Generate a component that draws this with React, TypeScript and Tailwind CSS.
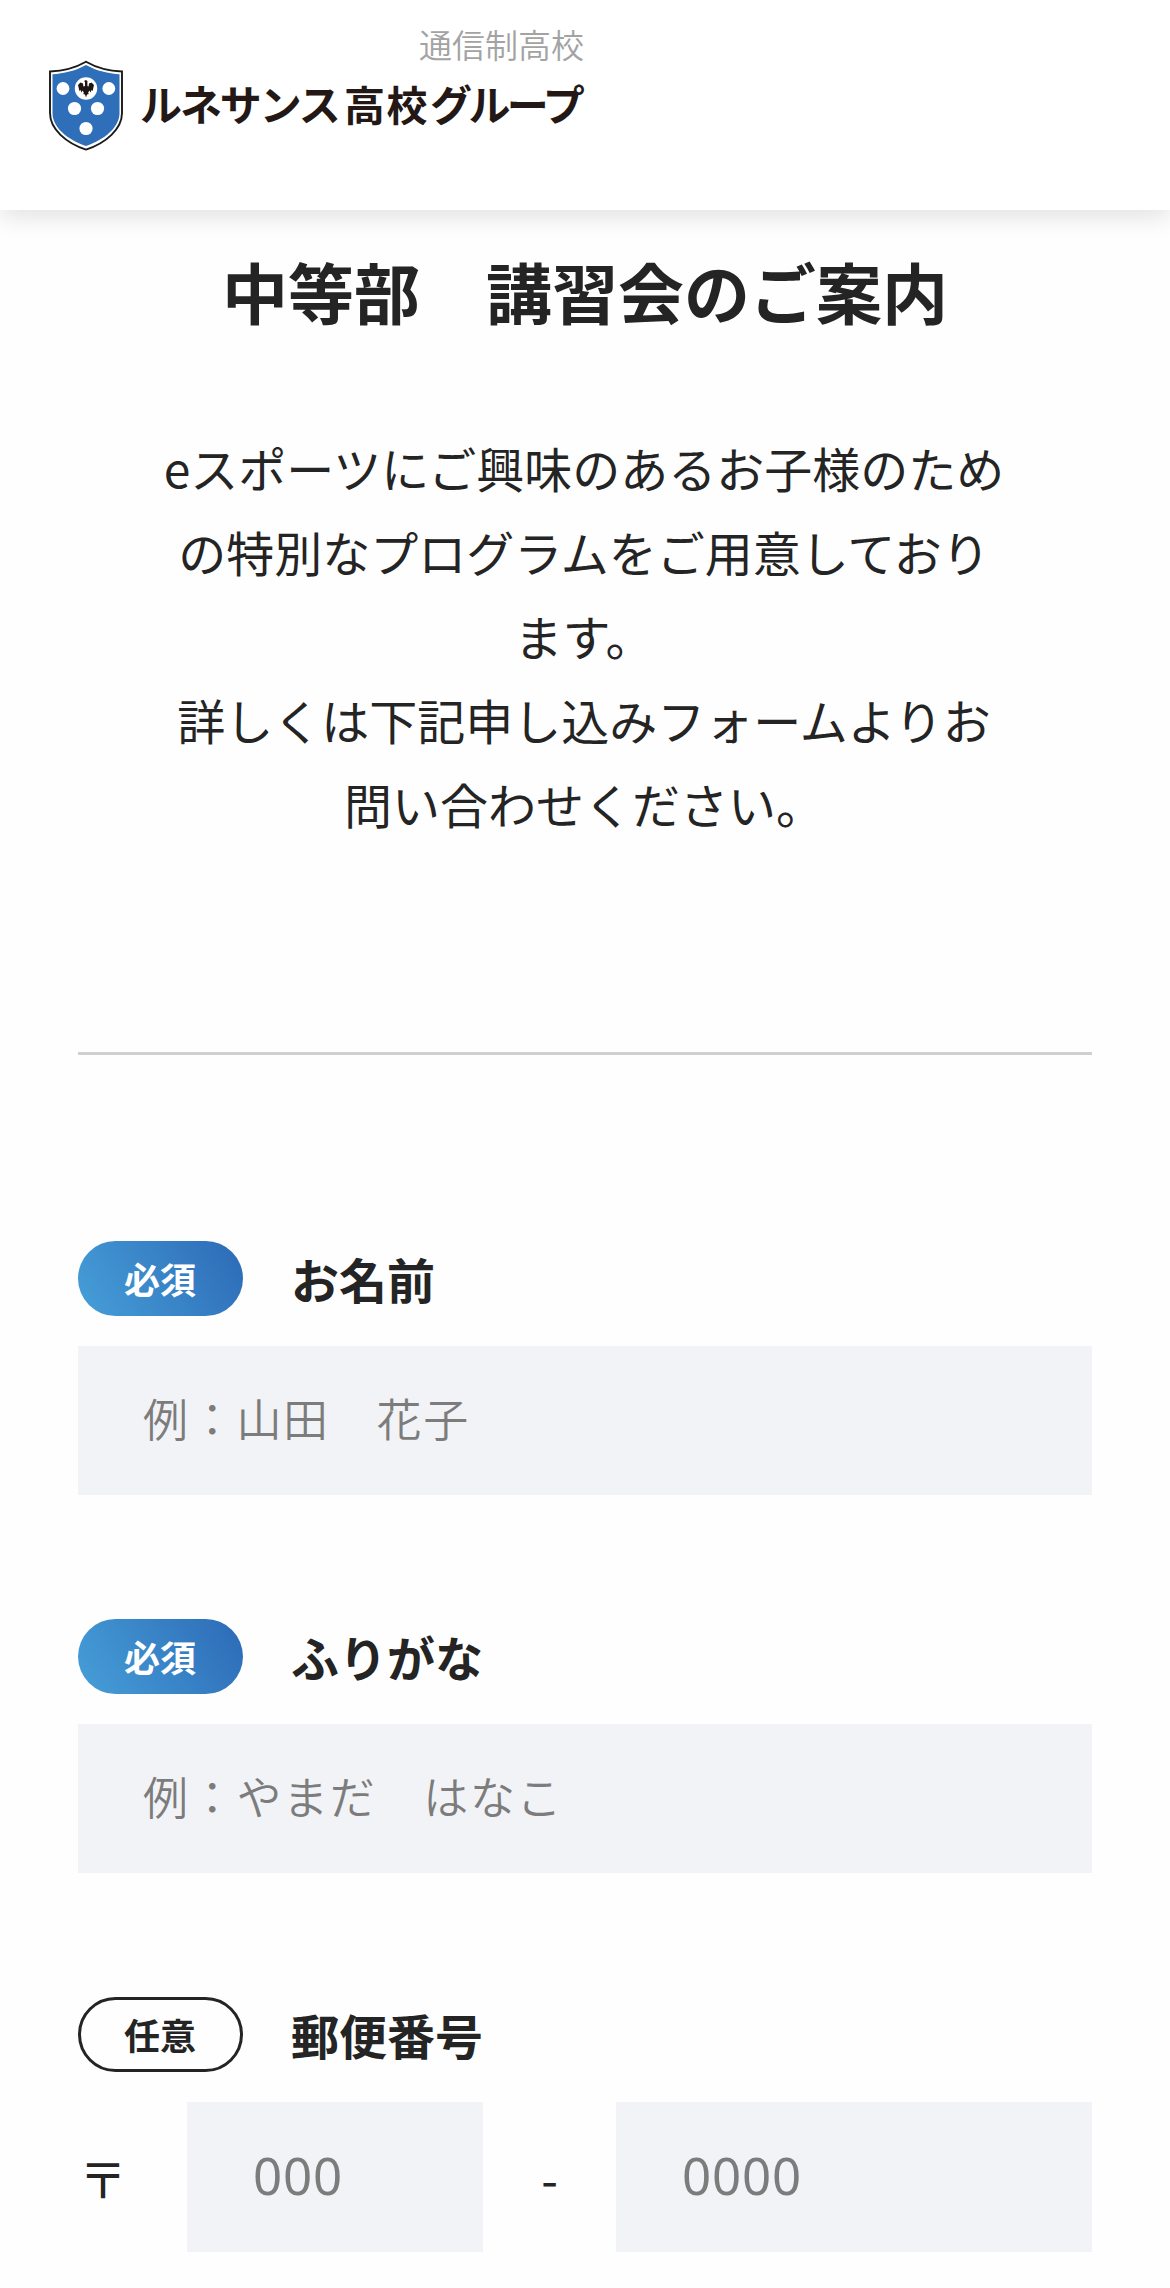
import { clsx } from 'clsx'

interface FieldLabelProps {
  label: string
  required?: boolean
}

interface TextFieldProps extends FieldLabelProps {
  name: string
  placeholder: string
}

const inputClass =
  'block min-w-0 rounded-none bg-[#f2f3f7] text-[#242424] outline-none placeholder:text-[#7c7c7c]'
const textInputClass = 'h-[149px] w-full pl-[65px] pr-12 pb-[7px] font-[350] text-[45px] leading-[60px] tracking-[1.7px]'
const zipInputClass = "h-[150px] pl-[66px] pr-6 pb-1 font-['Noto_Sans',sans-serif] text-[51px] leading-[60px] tracking-[0.8px]"

// Shield with the six dots and the small bird mark in the top one
function ShieldMark() {
  return (
    <svg width="76" height="92" viewBox="0 0 76 92" className="block shrink-0" aria-hidden="true">
      <path
        d="M38 1.7C27 8 14 11 2 11.5V53C2 69 18 83 38 89.6C58 83 74 69 74 53V11.5C62 11 49 8 38 1.7Z"
        fill="#fff"
        stroke="#1a1a1a"
        strokeWidth="1.9"
      />
      <path
        d="M38 5C27 11 16 13.6 4.5 14.2V53C4.5 67 19 79.5 38 86C57 79.5 71.5 67 71.5 53V14.2C60 13.6 49 11 38 5Z"
        fill="#2f6eb9"
      />
      <g fill="#fff">
        <circle cx="15" cy="28.5" r="6.4" />
        <circle cx="38" cy="28.5" r="11.2" />
        <circle cx="60.8" cy="28.5" r="6.4" />
        <circle cx="26.5" cy="48.5" r="6.6" />
        <circle cx="49.5" cy="48.5" r="6.6" />
        <circle cx="38" cy="68.5" r="6.6" />
      </g>
      <path
        d="M36 21L38 20L39.4 21V26L40.6 26.5L41 23.5L43.5 22.5L46 25L44.6 31L43.4 30L42.6 32.5L41.4 30.5L40 33L41 34L39 34.4L38 37.5L37 34.4L35 34L36 33L34.6 30.5L33.4 32.5L32.6 30L31.400 31L30 25L32.5 22.5L35 23.5L35.4 26.5L37 26V22Z"
        fill="#1f1613"
      />
    </svg>
  )
}

function Logo() {
  return (
    <div className="flex items-start">
      <ShieldMark />
      <div className="ml-4 flex pt-[13px] text-[42px] leading-[60px] font-bold whitespace-nowrap text-[#231815]">
        <span className="w-[204px] tracking-[-2.1px]">ルネサンス</span>
        <span className="w-[86px] text-[41px] tracking-[1.5px]">高校</span>
        <span className="tracking-[-3.6px]">グループ</span>
      </div>
    </div>
  )
}

function Header() {
  return (
    <header className="relative h-[210px] bg-white pl-12 shadow-[0_6px_24px_rgba(0,0,0,0.12)]">
      <div className="w-[536px] pt-[20px] text-right">
        <p className="text-[33px] leading-[48px] font-[350] text-[#a3a3a3]">通信制高校</p>
      </div>
      <div className="-mt-2">
        <Logo />
      </div>
    </header>
  )
}

function FieldLabel({ label, required }: FieldLabelProps) {
  return (
    <div className="mb-[30px] flex h-[75px] items-center">
      <span
        className={clsx(
          'flex h-[75px] w-[165px] items-center justify-center rounded-full pr-px pb-0.5 text-[36px] leading-none font-bold',
          required
            ? 'bg-linear-[60deg,#469fd8,#2d6ab7] text-white'
            : 'border-[3px] border-[#242424]',
        )}
      >
        {required ? '必須' : '任意'}
      </span>
      <span className="ml-12 pb-0.5 text-[48px] leading-[72px] font-bold">{label}</span>
    </div>
  )
}

function TextField({ label, required, name, placeholder }: TextFieldProps) {
  return (
    <div>
      <FieldLabel label={label} required={required} />
      <input name={name} placeholder={placeholder} className={clsx(inputClass, textInputClass)} />
    </div>
  )
}

export default function App() {
  return (
    <div
      lang="ja"
      className="h-[2288px] w-full overflow-hidden bg-[#fefefe] font-['Noto_Sans_CJK_JP',sans-serif] text-[#242424]"
    >
      <Header />
      <main className="px-[78px]">
        <h1 className="pt-[31px] text-center text-[66px] leading-[99px] font-bold">中等部　講習会のご案内</h1>
        <p className="mt-[85px] pr-[2px] text-center text-[48px] leading-[84px]">
          eスポーツにご興味のあるお子様のため
          <br />
          の特別なプログラムをご用意しており
          <br />
          ます。
          <br />
          詳しくは下記申し込みフォームよりお
          <br />
          問い合わせください。
        </p>
        <hr className="mt-[207px] border-t-[3px] border-[#d0d0d0]" />

        <form className="mt-[186px] flex flex-col gap-[124px]">
          <TextField required label="お名前" name="name" placeholder="例：山田　花子" />
          <TextField required label="ふりがな" name="kana" placeholder="例：やまだ　はなこ" />
          <div>
            <FieldLabel label="郵便番号" />
            <div className="flex items-center text-[48px]">
              <span className="w-[109px] pl-px">〒</span>
              <input name="zip1" placeholder="000" className={clsx(inputClass, zipInputClass, 'w-[296px]')} />
              <span className="w-[133px] text-center">-</span>
              <input name="zip2" placeholder="0000" className={clsx(inputClass, zipInputClass, 'flex-1')} />
            </div>
          </div>
        </form>
      </main>
    </div>
  )
}
